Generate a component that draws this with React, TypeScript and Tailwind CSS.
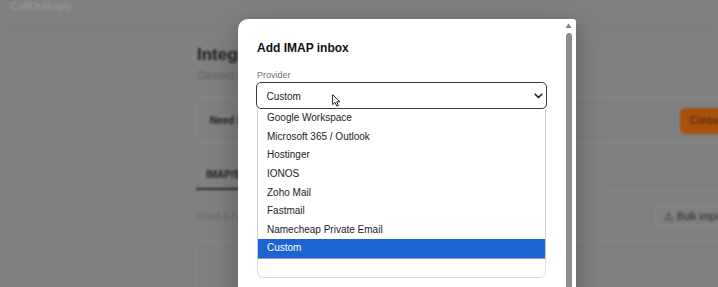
import React from "react";
import { Upload } from "lucide-react";

const FONT = { fontFamily: '"Liberation Sans", Arial, sans-serif' };

const providers = [
  "Google Workspace",
  "Microsoft 365 / Outlook",
  "Hostinger",
  "IONOS",
  "Zoho Mail",
  "Fastmail",
  "Namecheap Private Email",
  "Custom",
];

function Field({ label, mt }: { label: string; mt: string }) {
  return (
    <div className={`${mt} ml-[1px] w-[289px]`}>
      <div className="text-[9px] leading-[12px] text-[#6b7280] pl-[1px]">{label}</div>
      <div className="mt-[4px] h-[30px] rounded-[6px] border border-[#dcdcdc] bg-white" />
    </div>
  );
}

export default function App() {
  return (
    <div className="relative w-[718px] h-[287px] overflow-hidden bg-[#808080]" style={FONT}>
      {/* Background page (dimmed + blurred) */}
      <div className="blur-[0.8px]">
        <header className="h-[27px] border-b border-[#777777] px-[10px] text-[11px] leading-[12px] text-[#9e9e9e]">
          CallOnReply
        </header>
        <main className="ml-[197px] w-[560px] pt-[17px]">
          <h1 className="text-[17px] leading-[22px] font-bold text-[#202020]">Integrations</h1>
          <p className="mt-[2.5px] text-[10px] leading-[14px] text-[#5e5e5e]">
            Connect your inboxes and tools to CallOnReply.
          </p>
          <div className="mt-[15.5px] -ml-[1px] h-[45px] rounded-[8px] border border-[#8c8c8c] flex items-center justify-between pl-[13px] pr-[12px]">
            <span className="text-[10px] font-bold text-[#1e1e1e]">Need help connecting your inbox?</span>
            <button className="h-[26px] w-[64px] pl-[10px] text-left rounded-[6px] bg-[#a9500c] text-[10px] text-[#3f1d04] whitespace-nowrap overflow-hidden">
              Contact us
            </button>
          </div>
          <div className="mt-[17px] -ml-[1px] flex border-b border-[#888888]">
            <div className="px-[10px] pt-[7.5px] pb-[6.5px] border-b-2 border-[#2a2a2a] text-[10px] leading-[14px] font-bold text-[#222]">
              IMAP/SMTP
            </div>
            <div className="px-[10px] pt-[7.5px] pb-[6.5px] text-[10px] leading-[14px] text-[#555]">OAuth</div>
          </div>
          <div className="mt-[14px] h-[22px] flex items-center justify-between">
            <span className="text-[10px] text-[#636363]">Used 0 / 3 inboxes</span>
            <button className="h-[22px] w-[102px] flex items-center gap-[4px] pl-[8px] rounded-[6px] border border-[#8c8c8c] text-[10px] text-[#2b2b2b]">
              <Upload size={9} strokeWidth={2} />
              Bulk import
            </button>
          </div>
          <div className="mt-[14px] -ml-[1px] h-[80px] rounded-[8px] border border-[#8a8a8a]" />
        </main>
      </div>

      {/* Modal */}
      <div className="absolute left-[238px] top-[19px] w-[338px] h-[290px] bg-white rounded-tl-[10px] rounded-tr-[3px] shadow-[0_8px_30px_rgba(0,0,0,0.28)]">
        <div className="ml-[18px] w-[291px] pt-[21px]">
          <h2 className="pl-[1px] text-[12px] leading-[16px] font-bold text-[#111]">Add IMAP inbox</h2>
          <div className="mt-[13px] pl-[1px] text-[9px] leading-[12px] text-[#6b7280]">Provider</div>
          <div className="relative mt-[1px]">
            <div className="h-[27px] rounded-[5px] border-[1.5px] border-[#3a3a3a] flex items-center justify-between pl-[9.5px] pr-[3px] pt-[1px]">
              <span className="text-[10px] text-[#1a1a1a]">Custom</span>
              <svg width="9" height="6" viewBox="0 0 9 6" className="mb-[1px]">
                <path d="M1.2 1.2 L4.5 4.5 L7.8 1.2" fill="none" stroke="#1f1f1f" strokeWidth="1.6" strokeLinecap="round" strokeLinejoin="round" />
              </svg>
            </div>
            <ul className="absolute z-10 left-[1px] top-[27px] w-[289px] bg-white border-x border-[#cfcfcf] border-b border-b-[#9a9a9a]">
              {providers.map((p) => (
                <li
                  key={p}
                  className={`h-[18.625px] leading-[18.625px] pl-[9px] text-[10px] ${
                    p === "Custom" ? "bg-[#1b64d1] text-white" : "text-[#222]"
                  }`}
                >
                  {p}
                </li>
              ))}
            </ul>
          </div>
          <Field label="Email address" mt="mt-[11px]" />
          <Field label="Password" mt="mt-[10px]" />
          <Field label="IMAP host" mt="mt-[10px]" />
        </div>

        {/* scrollbar */}
        <svg width="7" height="6" viewBox="0 0 7 6" className="absolute right-[4px] top-[4px]">
          <path d="M3.5 0.5 L6.5 5 L0.5 5 Z" fill="#7a7a7a" />
        </svg>
        <div className="absolute right-[4px] top-[14px] w-[6px] h-[300px] rounded-full bg-[#8e8e8e]" />
      </div>

      {/* mouse cursor */}
      <svg width="9" height="13" viewBox="0 0 9 13" className="absolute left-[332px] top-[94px]">
        <path
          d="M0.6 0.6 L0.6 10.6 L3 8.4 L4.8 12.2 L6.4 11.5 L4.7 7.8 L7.9 7.8 Z"
          fill="#fff"
          stroke="#111"
          strokeWidth="0.9"
          strokeLinejoin="round"
        />
      </svg>
    </div>
  );
}
